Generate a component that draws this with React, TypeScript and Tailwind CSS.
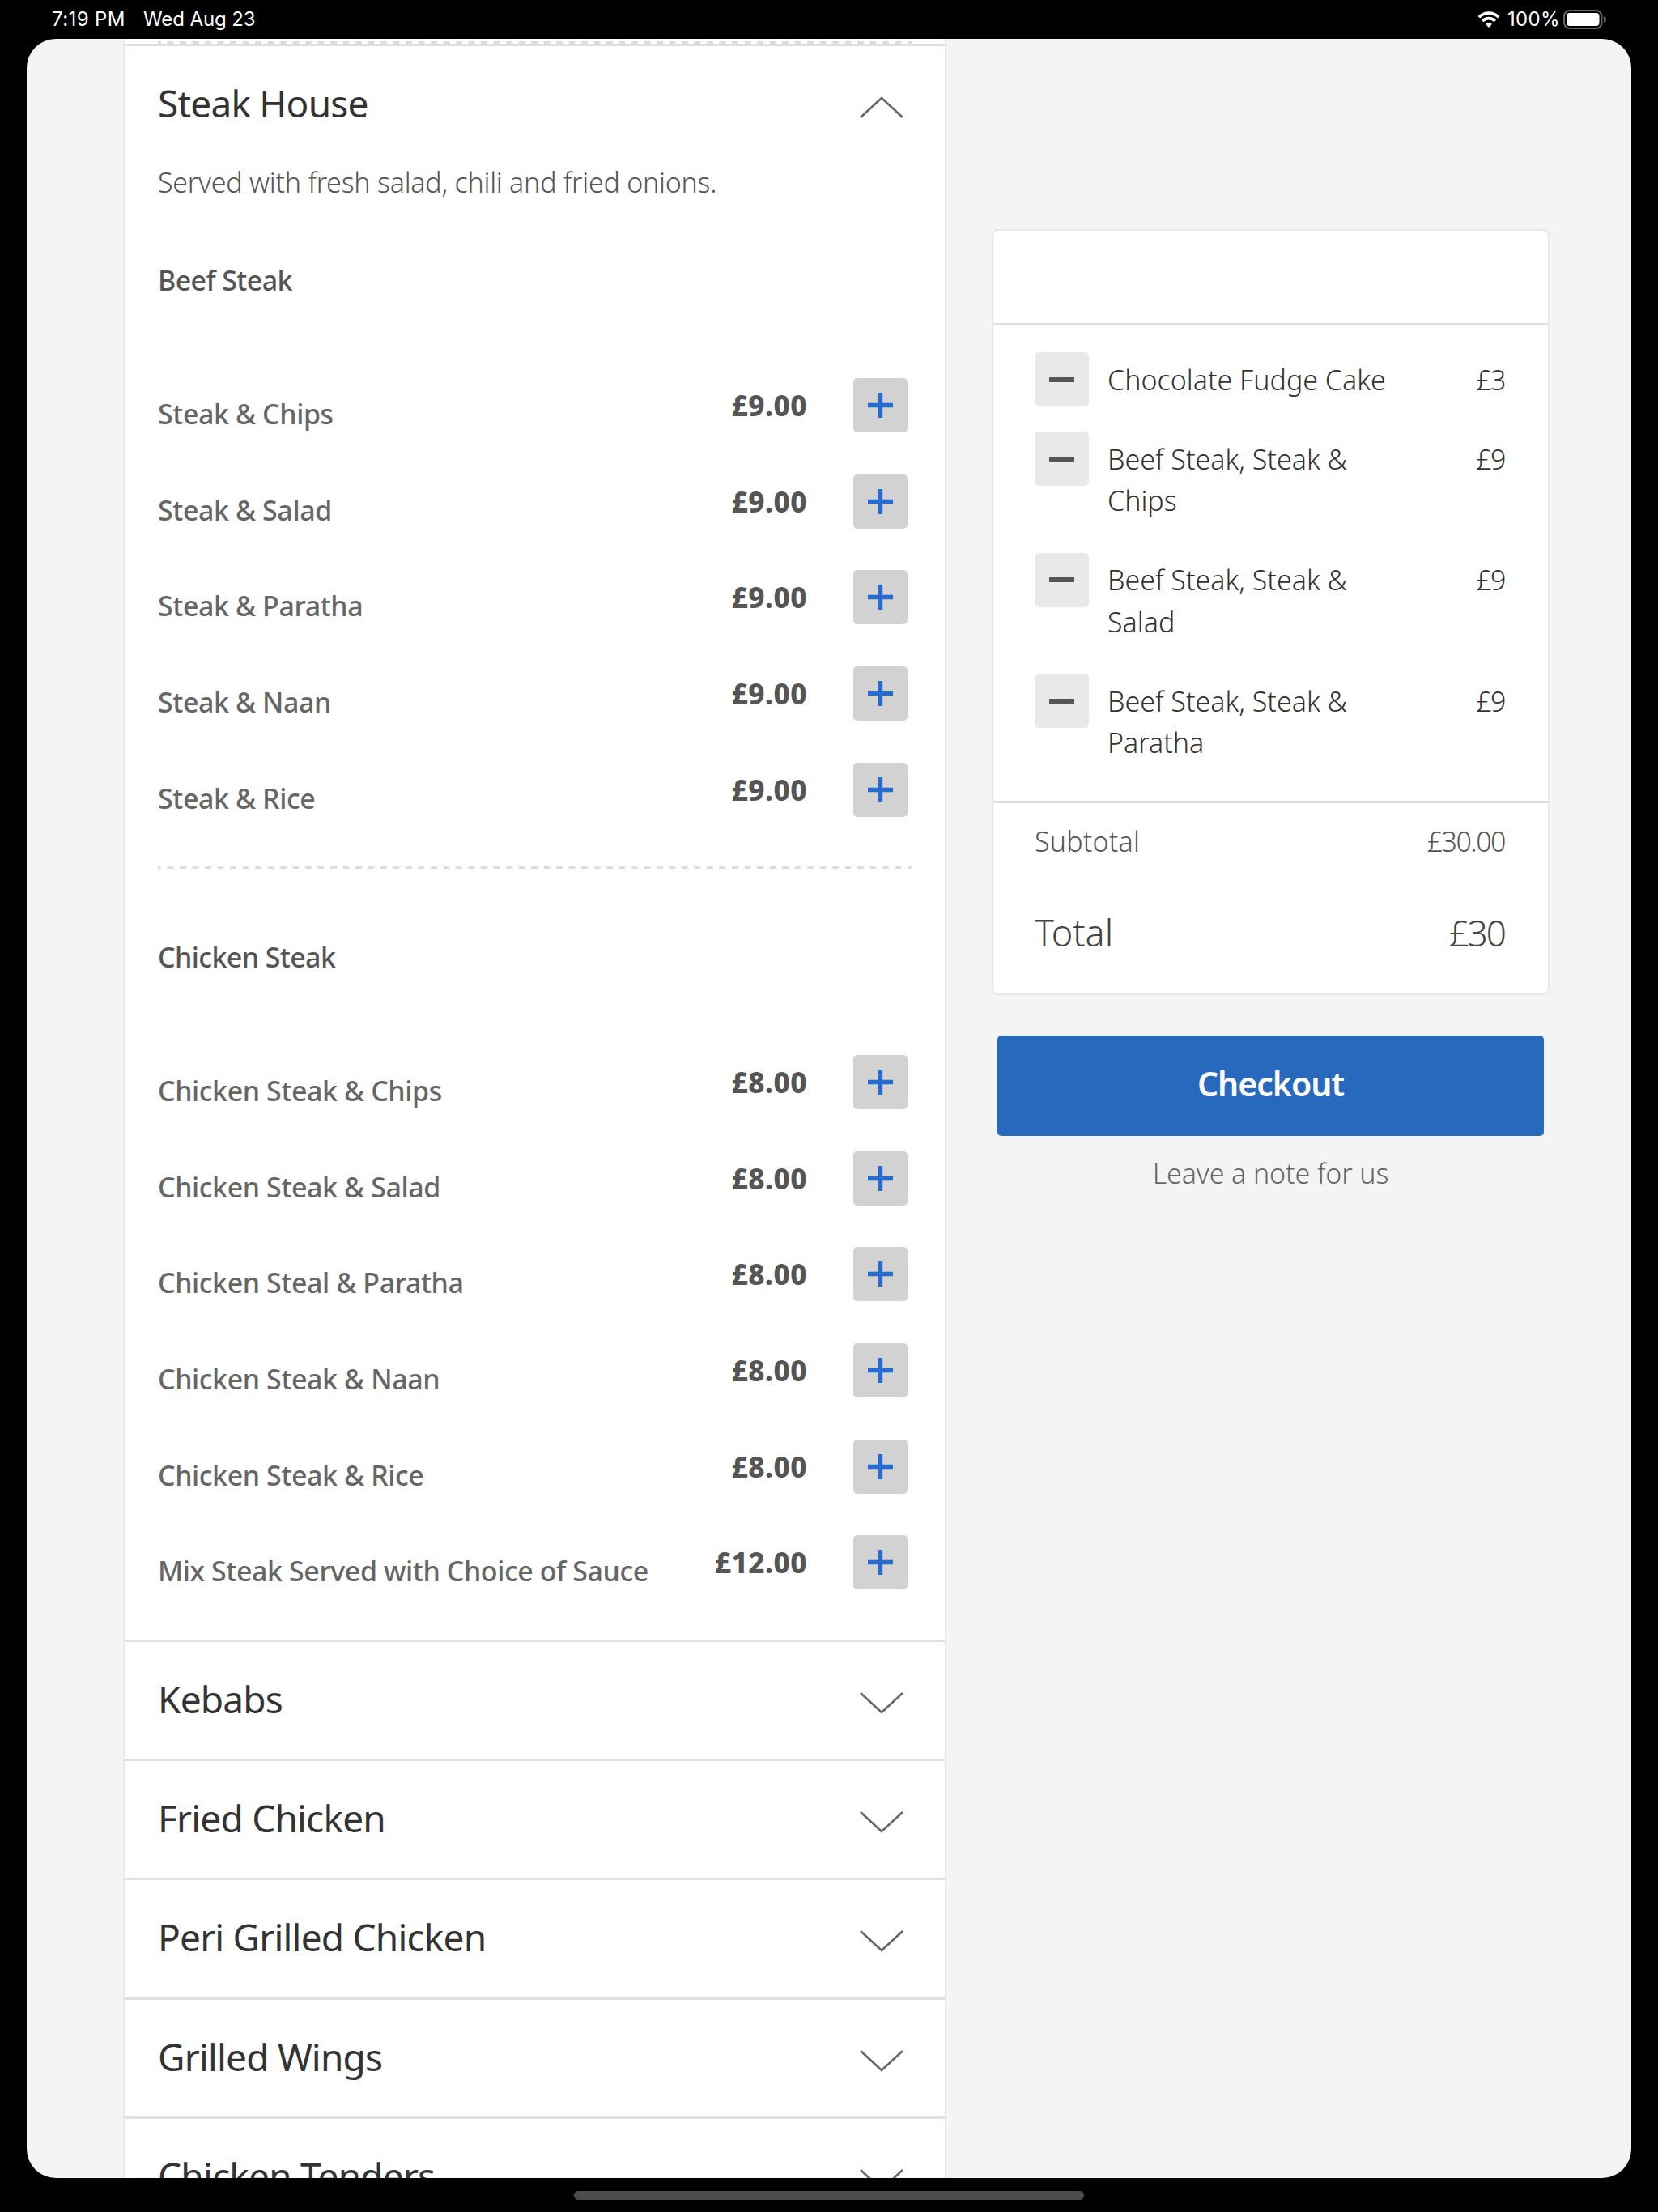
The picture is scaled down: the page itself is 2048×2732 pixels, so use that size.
import { useState } from "react";

interface MenuItem {
  name: string;
  price: string;
}

interface MenuGroup {
  title: string;
  items: MenuItem[];
}

const groups: MenuGroup[] = [
  {
    title: "Beef Steak",
    items: [
      { name: "Steak & Chips", price: "£9.00" },
      { name: "Steak & Salad", price: "£9.00" },
      { name: "Steak & Paratha", price: "£9.00" },
      { name: "Steak & Naan", price: "£9.00" },
      { name: "Steak & Rice", price: "£9.00" },
    ],
  },
  {
    title: "Chicken Steak",
    items: [
      { name: "Chicken Steak & Chips", price: "£8.00" },
      { name: "Chicken Steak & Salad", price: "£8.00" },
      { name: "Chicken Steal & Paratha", price: "£8.00" },
      { name: "Chicken Steak & Naan", price: "£8.00" },
      { name: "Chicken Steak & Rice", price: "£8.00" },
      { name: "Mix Steak Served with Choice of Sauce", price: "£12.00" },
    ],
  },
];

const categories = ["Kebabs", "Fried Chicken", "Peri Grilled Chicken", "Grilled Wings", "Chicken Tenders"];

const basket = [
  { name: "Chocolate Fudge Cake", price: "£3" },
  { name: "Beef Steak, Steak & Chips", price: "£9" },
  { name: "Beef Steak, Steak & Salad", price: "£9" },
  { name: "Beef Steak, Steak & Paratha", price: "£9" },
];

export default function App() {
  return (
    <div className="flex h-[2732px] w-[2048px] flex-col overflow-hidden bg-black font-['Noto_Sans',sans-serif]">
      <StatusBar />
      <div className="mx-[33px] flex h-[2642px] shrink-0 items-start overflow-hidden rounded-[36px] bg-[#f4f4f4]">
        <Menu />
        <Basket />
      </div>
      <div className="mx-auto mt-4 h-[11px] w-[630px] shrink-0 rounded-full bg-[#4c4c4c]" />
    </div>
  );
}

function StatusBar() {
  return (
    <header className="flex h-12 shrink-0 items-center pl-16 pr-16 font-['Inter',sans-serif] text-[24px] leading-[48px] text-white">
      <span className="w-[113px] whitespace-nowrap tracking-[0.4px]">7:19 PM</span>
      <span className="whitespace-nowrap tracking-[-0.1px]">Wed Aug 23</span>
      <svg className="ml-auto h-5 w-7" viewBox="0 0 28 20" fill="none" stroke="#fff" strokeWidth="3.6">
        <path d="M1.8 7.2a17.3 17.3 0 0 1 24.4 0" />
        <path d="M6.2 11.9a11 11 0 0 1 15.6 0" />
        <path d="M14 20l-4-4.2a5.8 5.8 0 0 1 8 0z" fill="#fff" stroke="none" />
      </svg>
      <span className="ml-[9px] w-[69px] whitespace-nowrap tracking-[0.3px]">100%</span>
      <svg className="h-6 w-[53px]" viewBox="0 0 53 24">
        <rect x="1" y="1" width="46.5" height="22" rx="7" fill="none" stroke="#666" strokeWidth="2" />
        <rect x="4" y="4" width="40.5" height="16" rx="4" fill="#fff" />
        <path d="M50 8c2 .7 3 2.200 3 4s-1 3.300-3 4z" fill="#666" />
      </svg>
    </header>
  );
}

function Menu() {
  const [open, setOpen] = useState(true);

  return (
    <main className="ml-[119px] w-[1017px] shrink-0 border-x-2 border-[#e9e9e9] bg-white pt-[3px]">
      <DashedRule />
      <section className="border-t-[3px] border-[#e0e0e0]">
        <button type="button" onClick={() => setOpen(!open)} className="flex h-[142px] w-full items-start pl-[41px] pr-[51px]">
          <span className="text-[46px] leading-[140px] tracking-[-0.8px] text-[#333]">Steak House</span>
          <Chevron up={open} />
        </button>
        {open && (
          <div className="pb-[10px]">
            <p className="pl-[41px] text-[34px] font-light leading-[52px] tracking-[-0.24px] text-[#555]">
              Served with fresh salad, chili and fried onions.
            </p>
            <GroupList group={groups[0]} className="mt-[69px]" />
            <div className="h-[10px]" />
            <DashedRule />
            <GroupList group={groups[1]} className="mt-[82.5px]" />
          </div>
        )}
      </section>
      {categories.map((category) => (
        <button
          key={category}
          type="button"
          className="flex h-[147.2px] w-full items-start border-t-[3px] border-[#e0e0e0] pl-[41px] pr-[51px]"
        >
          <span className="text-[46px] leading-[140px] tracking-[-0.8px] text-[#333]">{category}</span>
          <Chevron />
        </button>
      ))}
    </main>
  );
}

function GroupList({ group, className }: { group: MenuGroup; className: string }) {
  return (
    <div className={className}>
      <h3 className="mb-[95px] pl-[41px] text-[34px] font-medium leading-[52px] tracking-[-0.6px] text-[#555]">
        {group.title}
      </h3>
      {group.items.map((item) => (
        <div key={item.name} className="flex h-[118.7px] items-start pl-[41px] pr-[46px]">
          <span className="pt-[18px] text-[34px] font-medium leading-[52px] tracking-[-0.42px] text-[#666]">
            {item.name}
          </span>
          <span className="ml-auto text-[35px] font-extrabold leading-[68px] tracking-[0.5px] text-[#555]">
            {item.price}
          </span>
          <button type="button" className="ml-[57px] flex size-[67px] items-center justify-center rounded-[5px] bg-[#d2d2d2]">
            <svg className="size-[31px]" viewBox="0 0 31 31" stroke="#266ccf" strokeWidth="5.4">
              <path d="M15.500 0v31M0 15.500h31" />
            </svg>
          </button>
        </div>
      ))}
    </div>
  );
}

function DashedRule() {
  return (
    <svg className="ml-[41px] block h-[3px] w-[931px]" viewBox="0 0 931 3">
      <path d="M0 1.500h931" stroke="#dcdcdc" strokeWidth="3" strokeDasharray="7.750" strokeDashoffset="3.875" />
    </svg>
  );
}

function Chevron({ up = false }: { up?: boolean }) {
  return (
    <svg className="ml-auto mt-[62px] h-[27px] w-[54px]" viewBox="0 0 54 27" fill="none" stroke="#666" strokeWidth="2.700">
      <path d={up ? "M1 26 27 2 53 26" : "M1 1 27 25 53 1"} />
    </svg>
  );
}

function Basket() {
  return (
    <aside className="ml-[56px] mt-[235px] w-[689px] shrink-0 font-light">
      <div className="rounded-lg border-2 border-[#e9e9e9] bg-white">
        <div className="h-[114px]" />
        <div className="h-[593px] border-y-[3px] border-[#dedede] pl-[51px] pr-[53px] pt-[33px]">
          {basket.map((item) => (
            <div key={item.name} className="mb-[31px] flex items-start text-[34px] leading-[51.700px] text-[#333]">
              <button type="button" className="flex size-[67px] shrink-0 items-center justify-center rounded-[5px] bg-[#e9e9e9]">
                <span className="h-[6px] w-[31px] bg-[#555]" />
              </button>
              <span className="ml-[23px] w-[345px] pb-[6.700px] pt-[8.500px]">{item.name}</span>
              <span className="ml-auto pt-[8.500px] tracking-[-1.5px]">{item.price}</span>
            </div>
          ))}
        </div>
        <div className="flex justify-between pl-[51px] pr-[53px] pt-[21px] text-[34px] leading-[52px] text-[#555]">
          <span className="tracking-[0.2px]">Subtotal</span>
          <span className="tracking-[-1.5px]">£30.00</span>
        </div>
        <div className="flex h-[162px] justify-between pl-[51px] pr-[53px] pt-[57px] text-[45px] leading-[60px] text-[#444]">
          <span>Total</span>
          <span className="text-[44px] tracking-[-2px]">£30</span>
        </div>
      </div>
      <button
        type="button"
        className="mx-[7px] mt-[50px] block h-[124px] w-[675px] rounded-[5px] bg-[#276abd] pb-[5px] text-[41px] font-semibold leading-[115px] tracking-[-1px] text-white"
      >
        Checkout
      </button>
      <a className="mt-[20px] block text-center text-[34px] leading-[52px] tracking-[-0.1px] text-[#666]">Leave a note for us</a>
    </aside>
  );
}
